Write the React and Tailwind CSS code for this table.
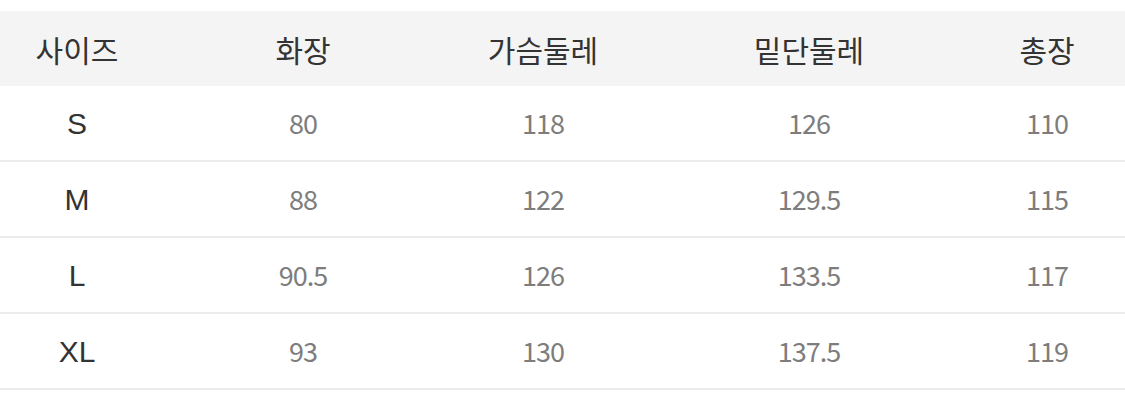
import React from 'react';

const rows = [
  ['S', '80', '118', '126', '110'],
  ['M', '88', '122', '129.5', '115'],
  ['L', '90.5', '126', '133.5', '117'],
  ['XL', '93', '130', '137.5', '119'],
];

const headers = ['사이즈', '화장', '가슴둘레', '밑단둘레', '총장'];

const cols = 'grid grid-cols-[154px_298px_182px_350px_126px]';

export default function App() {
  return (
    <div
      className="w-[1125px] h-[405px] bg-white pt-[11px] overflow-hidden"
      style={{ fontFamily: '"Noto Sans CJK KR", "Noto Sans", sans-serif' }}
    >
      <div className={`${cols} h-[75px] bg-[#f4f4f4] items-center`}>
        {headers.map((h) => (
          <div key={h} className="text-center text-[30px] leading-none text-[#333]">
            {h}
          </div>
        ))}
      </div>
      {rows.map((r) => (
        <div key={r[0]} className={`${cols} h-[76px] items-center border-b-2 border-[#ececec]`}>
          <div className="text-center text-[30px] leading-none pt-[2px] text-[#333] font-['Liberation_Sans',sans-serif]">{r[0]}</div>
          {r.slice(1).map((v, i) => (
            <div key={i} className="text-center text-[27px] text-[#7d7d7d] tracking-[-1px]">
              {v}
            </div>
          ))}
        </div>
      ))}
    </div>
  );
}
